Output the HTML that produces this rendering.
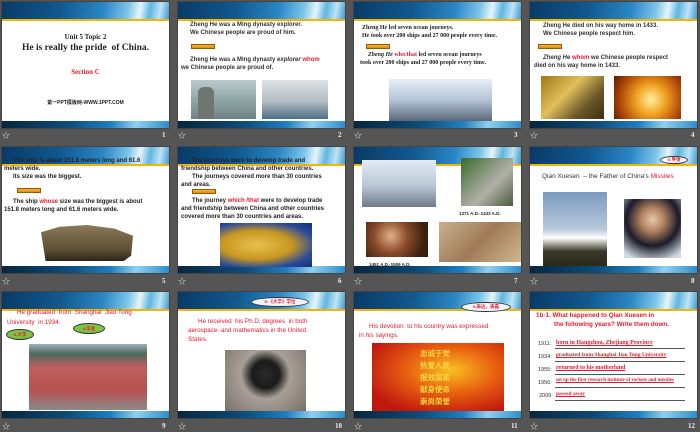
<!DOCTYPE html>
<html><head><meta charset="utf-8"><style>
*{margin:0;padding:0;box-sizing:border-box}
body{width:700px;height:431px;background:#555;position:relative;overflow:hidden;font-family:"Liberation Sans","Noto Sans CJK SC",sans-serif}
.s{position:absolute;width:167px;height:126px;background:#fff;overflow:hidden;outline:1px solid #444}
.s .h{position:absolute;left:0;top:0;width:167px;height:17px;background:linear-gradient(100deg,#0a3a66 0%,#11588f 35%,#2a86c4 60%,#7cc6ea 75%,#e6f4fb 82%,#5fb5e0 88%,#bfe4f5 94%,#3d9ad2 100%)}
.s .o{position:absolute;left:0;top:17px;width:167px;height:2px;background:#f4b400}
.s .b{position:absolute;left:0;bottom:0;width:167px;height:7px;background:linear-gradient(100deg,#07263f 0%,#0d4c7a 40%,#1f7fc0 65%,#8fd0ef 80%,#2c8ccb 100%)}
.t{position:absolute;font-size:6.6px;line-height:8px;font-weight:bold;color:#222;white-space:nowrap}
.r{color:#e8192c}
.n{position:absolute;color:#eee;font-size:7px;font-weight:bold;font-family:"Liberation Serif",serif}
.st{position:absolute;color:#ddd;font-size:8px}
.i{position:absolute}
.arr{position:absolute;width:24px;height:5px;background:linear-gradient(#f8b43a,#e08a10);border:1px solid #9a5a00}
.ov{position:absolute;border:1px solid #333;border-radius:50%;font-size:4.5px;text-align:center;font-weight:bold}
</style></head><body>

<!-- Slide 1 -->
<div class="s" style="left:2px;top:2px"><div class="h"></div><div class="o"></div><div class="b"></div>
<div class="t" style="left:0;width:167px;text-align:center;top:31px;font-family:'Liberation Serif',serif;font-size:7px">Unit 5 Topic 2</div>
<div class="t" style="left:0;width:167px;text-align:center;top:41px;font-family:'Liberation Serif',serif;font-size:9.5px;line-height:11px">He is really the pride &nbsp;of China.</div>
<div class="t r" style="left:0;width:167px;text-align:center;top:66px;font-family:'Liberation Serif',serif;font-size:7px">Section C</div>
<div class="t" style="left:0;width:167px;text-align:center;top:97px;font-size:5px">第一PPT模板网-WWW.1PPT.COM</div>
</div>

<!-- Slide 2 -->
<div class="s" style="left:178px;top:2px"><div class="h"></div><div class="o"></div><div class="b"></div>
<div class="t" style="left:12px;top:19px;font-size:6px;color:#333">Zheng He was a Ming dynasty explorer.<br>We Chinese people are proud of him.</div>
<div class="arr" style="left:13px;top:42px"></div>
<div class="t" style="left:12px;top:54px;font-size:6px;color:#333">Zheng He was a Ming dynasty <i>explorer</i> <span class="r">whom</span></div>
<div class="t" style="left:3px;top:62px;font-size:6px;color:#333">we Chinese people are proud of.</div>
<div class="i" style="left:13px;top:78px;width:65px;height:39px;background:linear-gradient(180deg,#b9c9cc,#8fa7a8 50%,#6d8283);"></div>
<div class="i" style="left:20px;top:85px;width:16px;height:32px;background:#6f7670;border-radius:6px 6px 0 0"></div>
<div class="i" style="left:84px;top:78px;width:66px;height:39px;background:linear-gradient(180deg,#dfe3e6,#b2bcc3 55%,#4d6f86)"></div>
</div>

<!-- Slide 3 -->
<div class="s" style="left:354px;top:2px"><div class="h"></div><div class="o"></div><div class="b"></div>
<div class="t" style="left:8px;top:22px;font-family:'Liberation Serif',serif;font-size:6px">Zheng He led seven ocean journeys.<br>He took over 200 ships and 27 000 people every time.</div>
<div class="arr" style="left:12px;top:42px"></div>
<div class="t" style="left:14px;top:49px;font-family:'Liberation Serif',serif;font-size:6px"><i>Zheng He</i> <span class="r">who/that</span> led seven ocean journeys</div>
<div class="t" style="left:6px;top:57px;font-family:'Liberation Serif',serif;font-size:6px">took over 200 ships and 27 000 people every time.</div>
<div class="i" style="left:35px;top:77px;width:103px;height:42px;background:linear-gradient(180deg,#e8eef6,#b4c4d6 50%,#8797a8 75%,#5b6878)"></div>
</div>

<!-- Slide 4 -->
<div class="s" style="left:530px;top:2px"><div class="h"></div><div class="o"></div><div class="b"></div>
<div class="t" style="left:13px;top:20px;font-size:6px;color:#333">Zheng He died on his way home in 1433.<br>We Chinese people respect him.</div>
<div class="arr" style="left:8px;top:42px"></div>
<div class="t" style="left:13px;top:52px;font-size:6px;color:#333"><i>Zheng He</i> <span class="r">whom</span> we Chinese people respect</div>
<div class="t" style="left:4px;top:60px;font-size:6px;color:#333">died on his way home in 1433.</div>
<div class="i" style="left:11px;top:74px;width:63px;height:43px;background:linear-gradient(135deg,#a07818,#e0be5a 40%,#6e5a2a 70%,#3a2c10)"></div>
<div class="i" style="left:84px;top:74px;width:67px;height:43px;background:radial-gradient(circle at 55% 55%,#fff0a0,#f0a020 35%,#b04808 70%,#5a1a00)"></div>
</div>

<!-- Row 1 footers -->
<div class="st" style="left:2px;top:130px">☆</div><div class="n" style="left:162px;top:131px">1</div>
<div class="st" style="left:178px;top:130px">☆</div><div class="n" style="left:338px;top:131px">2</div>
<div class="st" style="left:354px;top:130px">☆</div><div class="n" style="left:514px;top:131px">3</div>
<div class="st" style="left:530px;top:130px">☆</div><div class="n" style="left:691px;top:131px">4</div>

<!-- Slide 5 -->
<div class="s" style="left:2px;top:147px"><div class="h"></div><div class="o"></div><div class="b"></div>
<div class="t" style="left:11px;top:10px;font-size:6px;color:#222">The ship is about 151.8 meters long and 61.6</div>
<div class="t" style="left:2px;top:18px;font-size:6px;color:#222">meters wide.</div>
<div class="t" style="left:11px;top:26px;font-size:6px;color:#222">Its size was the biggest.</div>
<div class="arr" style="left:15px;top:41px"></div>
<div class="t" style="left:11px;top:51px;font-size:6px;color:#222">The ship <span class="r">whose</span> size was the biggest is about</div>
<div class="t" style="left:2px;top:59px;font-size:6px;color:#222">151.8 meters long and 61.6 meters wide.</div>
<div class="i" style="left:39px;top:78px;width:92px;height:36px;background:linear-gradient(180deg,#8a7a5a,#5e4e34 70%,#2a2418);clip-path:polygon(0 20%,20% 5%,50% 0,80% 10%,100% 30%,98% 85%,90% 100%,5% 100%)"></div>
</div>

<!-- Slide 6 -->
<div class="s" style="left:178px;top:147px"><div class="h"></div><div class="o"></div><div class="b"></div>
<div class="t" style="left:14px;top:10px;font-size:6px;color:#222">The journeys were to develop trade and</div>
<div class="t" style="left:3px;top:18px;font-size:6px;color:#222">friendship between China and other countries.</div>
<div class="t" style="left:14px;top:26px;font-size:6px;color:#222">The journeys covered more than 30 countries</div>
<div class="t" style="left:3px;top:34px;font-size:6px;color:#222">and areas.</div>
<div class="arr" style="left:14px;top:42px"></div>
<div class="t" style="left:14px;top:50px;font-size:6px;color:#222">The journey <span class="r">which /that</span> were to develop trade</div>
<div class="t" style="left:3px;top:58px;font-size:6px;color:#222">and friendship between China and other countries</div>
<div class="t" style="left:3px;top:66px;font-size:6px;color:#222">covered more than 30 countries and areas.</div>
<div class="i" style="left:42px;top:76px;width:92px;height:44px;background:radial-gradient(ellipse at 40% 50%,#e8c050,#c89820 45%,#2a4a9a 75%,#1a2e78)"></div>
</div>

<!-- Slide 7 -->
<div class="s" style="left:354px;top:147px"><div class="h"></div><div class="o"></div><div class="b"></div>
<div class="i" style="left:8px;top:13px;width:74px;height:47px;background:linear-gradient(180deg,#e4ebf3,#b8c6d6 55%,#6c7a8a)"></div>
<div class="i" style="left:107px;top:11px;width:52px;height:48px;background:linear-gradient(135deg,#3a6a2a,#8a9a80 40%,#b0b0a8 60%,#4a5a3a)"></div>
<div class="t" style="left:105px;top:63px;font-size:4.5px;color:#222">1371 A.D.-1433 A.D.</div>
<div class="i" style="left:12px;top:75px;width:62px;height:35px;background:radial-gradient(circle at 40% 40%,#e0b08a,#8a4a2a 40%,#3a2010 80%)"></div>
<div class="i" style="left:85px;top:75px;width:82px;height:40px;background:linear-gradient(135deg,#c8b090,#a07a58 50%,#d0b890)"></div>
<div class="t" style="left:15px;top:114px;font-size:4.5px;color:#222">1451 A.D.-1506 A.D.</div>
</div>

<!-- Slide 8 -->
<div class="s" style="left:530px;top:147px"><div class="h"></div><div class="o"></div><div class="b"></div>
<div class="ov" style="left:130px;top:9px;width:28px;height:8px;background:#fff;line-height:6px"><span class="r">n.导弹</span></div>
<div class="t" style="left:12px;top:26px;font-size:6.5px;font-weight:normal;color:#333">Qian Xuesen &nbsp;– the Father of China's <span class="r">Missiles</span></div>
<div class="i" style="left:13px;top:45px;width:64px;height:74px;background:linear-gradient(180deg,#7a9ac0,#b8c8da 50%,#ffffff 62%,#3a3a2a 80%,#2a2a1a)"></div>
<div class="i" style="left:94px;top:52px;width:57px;height:59px;background:radial-gradient(circle at 50% 35%,#e8c8a8,#b08060 25%,#1a1a2a 55%,#d0d8e0 90%)"></div>
</div>

<!-- Row 2 footers -->
<div class="st" style="left:2px;top:276px">☆</div><div class="n" style="left:162px;top:277px">5</div>
<div class="st" style="left:178px;top:276px">☆</div><div class="n" style="left:338px;top:277px">6</div>
<div class="st" style="left:354px;top:276px">☆</div><div class="n" style="left:514px;top:277px">7</div>
<div class="st" style="left:530px;top:276px">☆</div><div class="n" style="left:691px;top:277px">8</div>

<!-- Slide 9 -->
<div class="s" style="left:2px;top:292px"><div class="h"></div><div class="o"></div><div class="b"></div>
<div class="t r" style="left:15px;top:17px;font-size:6.3px;font-weight:normal">He graduated &nbsp;from &nbsp;Shanghai &nbsp;Jiao Tong</div>
<div class="t r" style="left:5px;top:27px;font-size:6.3px;font-weight:normal">University &nbsp;in 1934.</div>
<div class="ov" style="left:4px;top:37px;width:28px;height:11px;background:#7cc444;line-height:9px"><span class="r">n.大学</span></div>
<div class="ov" style="left:71px;top:31px;width:32px;height:11px;background:#7cc444;line-height:9px"><span class="r">v.毕业</span></div>
<div class="i" style="left:27px;top:52px;width:118px;height:66px;background:linear-gradient(180deg,#a0b0b8 0%,#4a6a5a 15%,#c06060 35%,#b85050 70%,#8a8a8a 100%)"></div>
</div>

<!-- Slide 10 -->
<div class="s" style="left:178px;top:292px"><div class="h"></div><div class="o"></div><div class="b"></div>
<div class="ov" style="left:73px;top:5px;width:58px;height:10px;background:#eef4fa;line-height:8px"><span class="r">n.《大学》学位</span></div>
<div class="t r" style="left:20px;top:26px;font-size:6.3px;font-weight:normal">He received &nbsp;his Ph.D. degrees &nbsp;in both</div>
<div class="t r" style="left:10px;top:35px;font-size:6.3px;font-weight:normal">aerospace &nbsp;and mathematics in the United</div>
<div class="t r" style="left:10px;top:44px;font-size:6.3px;font-weight:normal">States.</div>
<div class="i" style="left:47px;top:58px;width:81px;height:61px;background:radial-gradient(circle at 50% 40%,#2a2a2a,#1a1a1a 25%,#a8a098 45%,#7a7068 100%)"></div>
</div>

<!-- Slide 11 -->
<div class="s" style="left:354px;top:292px"><div class="h"></div><div class="o"></div><div class="b"></div>
<div class="ov" style="left:107px;top:10px;width:50px;height:10px;background:#eef4fa;line-height:8px"><span class="r">v.表达，表露</span></div>
<div class="t r" style="left:15px;top:31px;font-size:6.3px;font-weight:normal">His devotion &nbsp;to his country was expressed</div>
<div class="t r" style="left:5px;top:40px;font-size:6.3px;font-weight:normal">in his sayings.</div>
<div class="i" style="left:18px;top:51px;width:132px;height:68px;background:radial-gradient(ellipse at 60% 40%,#f8c020,#e86010 40%,#c01810 80%)"></div>
<div class="t" style="left:66px;top:56px;font-size:7.5px;line-height:12px;color:#f8d840;font-family:'Noto Sans CJK SC',sans-serif">忠诚于党<br>热爱人民<br>报效国家<br>献身使命<br>崇尚荣誉</div>
</div>

<!-- Slide 12 -->
<div class="s" style="left:530px;top:292px"><div class="h"></div><div class="o"></div><div class="b"></div>
<div class="t r" style="left:6px;top:20px;font-size:6.3px">1b-1. What happened to Qian Xuesen in</div>
<div class="t r" style="left:24px;top:29px;font-size:6.3px">the following years? Write them down.</div>
<div class="t" style="left:8px;top:48px;font-size:5.5px;font-weight:normal;color:#333">1911:</div><div class="i" style="left:25px;top:56px;width:130px;height:1px;background:#555"></div>
<div class="t r" style="left:26px;top:47px;font-family:'Liberation Serif',serif;font-size:6px;text-decoration:underline">born in Hangzhou, Zhejiang Province</div>
<div class="t" style="left:8px;top:61px;font-size:5.5px;font-weight:normal;color:#333">1934:</div><div class="i" style="left:25px;top:69px;width:130px;height:1px;background:#555"></div>
<div class="t r" style="left:26px;top:59px;font-family:'Liberation Serif',serif;font-size:5.5px;text-decoration:underline">graduated from Shanghai Jiao Tong University</div>
<div class="t" style="left:8px;top:74px;font-size:5.5px;font-weight:normal;color:#333">1955:</div><div class="i" style="left:25px;top:82px;width:130px;height:1px;background:#555"></div>
<div class="t r" style="left:26px;top:72px;font-family:'Liberation Serif',serif;font-size:6px;text-decoration:underline">returned to his motherland</div>
<div class="t" style="left:8px;top:87px;font-size:5.5px;font-weight:normal;color:#333">1956:</div><div class="i" style="left:25px;top:95px;width:130px;height:1px;background:#555"></div>
<div class="t r" style="left:26px;top:85px;font-family:'Liberation Serif',serif;font-size:5px;text-decoration:underline">set up the first research institute of rockets and missiles</div>
<div class="t" style="left:9px;top:100px;font-size:5.5px;font-weight:normal;color:#333">2009:</div><div class="i" style="left:25px;top:108px;width:130px;height:1px;background:#555"></div>
<div class="t r" style="left:26px;top:98px;font-family:'Liberation Serif',serif;font-size:5.5px;text-decoration:underline">passed away</div>
</div>

<!-- Row 3 footers -->
<div class="st" style="left:2px;top:421px">☆</div><div class="n" style="left:162px;top:422px">9</div>
<div class="st" style="left:178px;top:421px">☆</div><div class="n" style="left:335px;top:422px">10</div>
<div class="st" style="left:354px;top:421px">☆</div><div class="n" style="left:511px;top:422px">11</div>
<div class="st" style="left:530px;top:421px">☆</div><div class="n" style="left:688px;top:422px">12</div>

</body></html>
